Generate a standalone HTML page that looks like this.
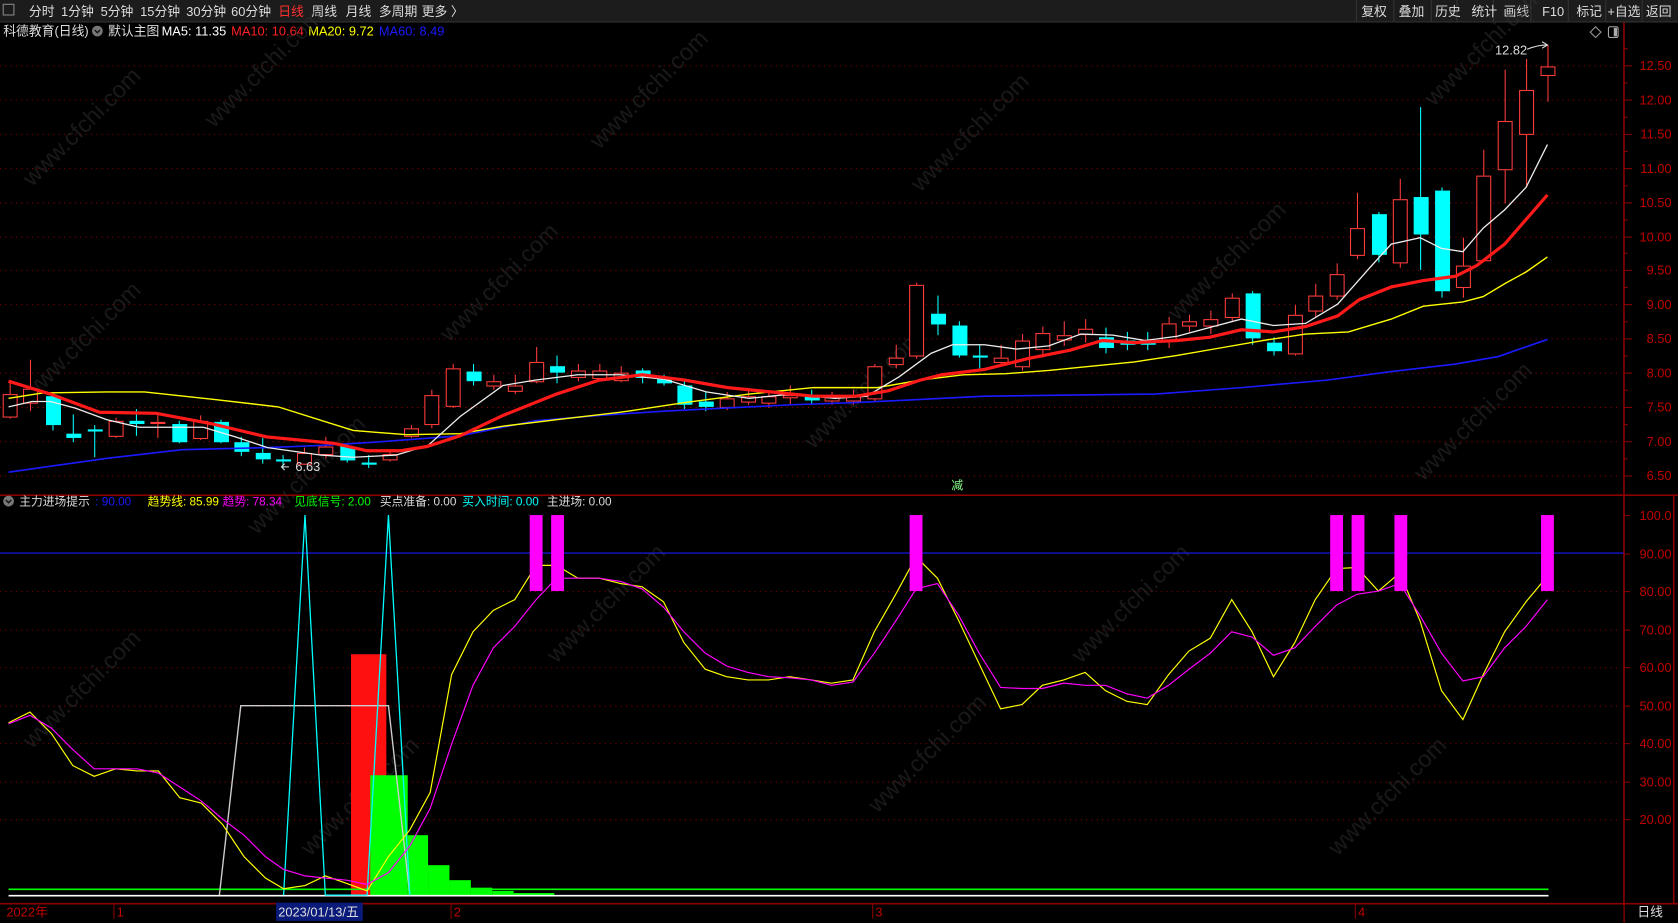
<!DOCTYPE html>
<html><head><meta charset="utf-8">
<style>
html,body{margin:0;padding:0;background:#000;width:1678px;height:923px;overflow:hidden}
svg{display:block}
text{font-family:"Liberation Sans","Noto Sans CJK SC",sans-serif}
</style></head>
<body>
<svg id="s" width="1678" height="923" viewBox="0 0 1568 862" preserveAspectRatio="none" xmlns="http://www.w3.org/2000/svg">
<rect x="0" y="0" width="1568" height="862" fill="#000"/>
<rect x="0" y="0" width="1568" height="20" fill="#1c1c1c"/>
<line x1="0" y1="20.5" x2="1568" y2="20.5" stroke="#333"/>
<g font-size="12" fill="#ddd">
<rect x="3" y="4" width="10" height="10" fill="none" stroke="#888"/>
<text x="27" y="15">分时</text><text x="57" y="15">1分钟</text><text x="94" y="15">5分钟</text><text x="131" y="15">15分钟</text><text x="174" y="15">30分钟</text><text x="216" y="15">60分钟</text>
<text x="260" y="15" fill="#ff3030">日线</text><text x="291" y="15">周线</text><text x="323" y="15">月线</text><text x="354" y="15">多周期</text><text x="394" y="15">更多 〉</text>
</g>
<g font-size="12" fill="#ddd">
<rect x="1361" y="0" width="1" height="20" fill="#333"/>
<rect x="1395" y="0" width="1" height="20" fill="#333"/>
<rect x="1430" y="0" width="1" height="20" fill="#333"/>
<rect x="1465" y="0" width="1" height="20" fill="#333"/>
<rect x="1500" y="0" width="1" height="20" fill="#333"/>
<rect x="1534" y="0" width="1" height="20" fill="#333"/>
<rect x="1267" y="0" width="1" height="20" fill="#333"/>
<rect x="1302" y="0" width="1" height="20" fill="#333"/>
<rect x="1337" y="0" width="1" height="20" fill="#333"/>
<text x="1272" y="15">复权</text><text x="1307" y="15">叠加</text><text x="1341" y="15">历史</text><text x="1375" y="15">统计</text><text x="1405" y="15">画线</text><text x="1441" y="15">F10</text><text x="1473" y="15">标记</text><text x="1502" y="15">+自选</text><text x="1538" y="15">返回</text>
</g>
<g font-size="12">
<text x="3" y="33" fill="#ddd">科德教育(日线)</text>
<circle cx="91" cy="29" r="5" fill="#777"/><path d="M88.5 28l2.5 2.5 2.5-2.5" stroke="#111" fill="none" stroke-width="1.3"/>
<text x="101" y="33" fill="#ddd">默认主图</text>
<text x="151" y="33" fill="#fff">MA5: 11.35</text>
<text x="216" y="33" fill="#ff2020">MA10: 10.64</text>
<text x="288" y="33" fill="#ffff00">MA20: 9.72</text>
<text x="354" y="33" fill="#1a1aff">MA60: 8.49</text>
</g>
<path d="M1491 25l5 5-5 5-5-5z" fill="none" stroke="#999"/>
<rect x="1503" y="25" width="9" height="10" rx="1.5" fill="none" stroke="#aaa"/><rect x="1508" y="26" width="3" height="8" fill="#aaa"/>
<line x1="1517.5" y1="21" x2="1517.5" y2="862" stroke="#8b0000" stroke-width="1.5"/>
<line x1="0" y1="462.5" x2="1568" y2="462.5" stroke="#8b0000" stroke-width="1.5"/>
<line x1="0" y1="844" x2="1568" y2="844" stroke="#8b0000" stroke-width="1.5"/>
<line x1="1564" y1="462" x2="1564" y2="844" stroke="#8b0000" stroke-width="1.5"/>
<g id="grid"></g>
<g id="wm" font-size="22" fill="#333" opacity="0.5"></g>
<g id="plot"></g>
<text x="1397" y="51" font-size="12" fill="#ddd">12.82</text>
<path d="M1427 46 Q1437 42 1446 42 M1441 39l5 3-5 3" stroke="#ddd" fill="none"/>
<path d="M270 436h-6 M266 433l-3 3 3 3" stroke="#ddd" fill="none"/>
<text x="276" y="440" font-size="12" fill="#ddd">6.63</text>
<text x="889" y="457" font-size="11" fill="#8f8">减</text>
<g font-size="11">
<circle cx="8" cy="468" r="5" fill="#777"/><path d="M5.5 467l2.5 2.5 2.5-2.5" stroke="#111" fill="none" stroke-width="1.3"/>
<text x="18" y="472" fill="#ddd">主力进场提示</text><text x="89" y="472" fill="#1a1aff">: 90.00</text>
<text x="138" y="472" fill="#ffff00">趋势线: 85.99</text>
<text x="208" y="472" fill="#ff00ff">趋势: 78.34</text>
<text x="275" y="472" fill="#00ff00">见底信号: 2.00</text>
<text x="355" y="472" fill="#ddd">买点准备: 0.00</text>
<text x="432" y="472" fill="#00ffff">买入时间: 0.00</text>
<text x="511" y="472" fill="#ddd">主进场: 0.00</text>
</g>
<rect x="0" y="845" width="1517" height="17" fill="#000"/>
<g font-size="12" fill="#c00000">
<text x="6" y="856">2022年</text>
<line x1="106.5" y1="844" x2="106.5" y2="858" stroke="#8b0000"/><text x="109" y="856">1</text>
<line x1="421.5" y1="844" x2="421.5" y2="858" stroke="#8b0000"/><text x="424" y="856">2</text>
<line x1="815.5" y1="844" x2="815.5" y2="858" stroke="#8b0000"/><text x="818" y="856">3</text>
<line x1="1266.5" y1="844" x2="1266.5" y2="858" stroke="#8b0000"/><text x="1269" y="856">4</text>
</g>
<rect x="258" y="843" width="81" height="17" fill="#0a1a7a"/>
<text x="260" y="856" font-size="12" fill="#ddd">2023/01/13/五</text>
<text x="1530" y="856" font-size="12" fill="#ddd">日线</text>
</svg>
<script>
var NS="http://www.w3.org/2000/svg",plot=document.getElementById('plot'),grid=document.getElementById('grid');
function el(t,a,p){var e=document.createElementNS(NS,t);for(var k in a)e.setAttribute(k,a[k]);(p||plot).appendChild(e);return e;}
var py=function(p){return 61+(12.5-p)*63.83;};
for(var p=6.5;p<=12.51;p+=0.5){var y=Math.round(py(p))+.5;el('line',{x1:0,y1:y,x2:1515,y2:y,stroke:'#8b0000','stroke-dasharray':'1 4'},grid);
 el('line',{x1:1517,y1:y,x2:1525,y2:y,stroke:'#8b0000'},grid);
 el('line',{x1:1517,y1:y-16,x2:1521,y2:y-16,stroke:'#8b0000'},grid);
 var t=el('text',{x:1562,y:y+4,'font-size':12,fill:'#c00000','text-anchor':'end'},grid);t.textContent=p.toFixed(2);}
var vy=function(v){return 481+(100-v)*3.55;};
for(var v=20;v<=100;v+=10){var y=Math.round(vy(v))+.5;if(v<100&&v!=90)el('line',{x1:0,y1:y,x2:1515,y2:y,stroke:'#8b0000','stroke-dasharray':'1 4'},grid);
 el('line',{x1:1517,y1:y,x2:1523,y2:y,stroke:'#8b0000'},grid);
 var t=el('text',{x:1562,y:y+4,'font-size':12,fill:'#c00000','text-anchor':'end'},grid);t.textContent=v==100?'100.0':v.toFixed(2);}
var wm=document.getElementById('wm');
[[30,175],[30,375],[30,700],[200,120],[240,500],[290,800],[420,320],[520,620],[560,140],[760,420],[820,760],[860,180],[1010,620],[1100,300],[1250,800],[1340,100],[1330,450]].forEach(function(q){var t=el('text',{x:q[0],y:q[1],transform:'rotate(-45 '+q[0]+' '+q[1]+')'},wm);t.textContent='www.cfchi.com';});
var C=[[9,368,389,355,391,'r'],[28,363,376,336,384,'r'],[49,370,397,368,402,'c'],[68,405,409,387,413,'c'],[88,401,403,397,427,'c'],[108,393,407,390,409,'r'],[127,393,396,382,407,'c'],[147,394,395,385,409,'r'],[167,396,413,393,414,'c'],[187,393,409,388,411,'r'],[206,394,413,392,414,'c'],[225,413,422,408,426,'c'],[245,423,429,409,433,'c'],[264,429,431,425,437,'c'],[284,423,433,418,434,'r'],[304,417,424,408,428,'r'],[324,417,430,414,432,'c'],[344,432,434,425,437,'c'],[364,424,429,420,431,'r'],[384,400,407,397,409,'r'],[403,369,396,364,400,'r'],[423,344,379,340,381,'r'],[442,347,356,340,360,'c'],[461,356,360,350,364,'r'],[481,360,365,350,368,'r'],[501,338,356,324,358,'r'],[520,342,348,332,358,'c'],[540,346,352,340,356,'r'],[560,346,353,340,356,'r'],[580,348,355,342,357,'r'],[600,346,353,344,358,'c'],[620,354,358,350,360,'c'],[639,360,378,355,382,'c'],[659,375,380,366,384,'c'],[679,372,380,366,383,'r'],[699,370,375,364,378,'r'],[718,370,376,366,381,'r'],[738,369,371,360,378,'r'],[758,370,374,364,378,'c'],[777,371,374,366,378,'r'],[797,369,374,364,378,'r'],[817,342,372,340,375,'r'],[837,334,340,322,344,'r'],[856,266,332,264,335,'r'],[876,293,303,276,313,'c'],[896,304,332,300,334,'c'],[915,332,334,322,344,'c'],[935,334,338,322,342,'r'],[955,318,342,312,346,'r'],[974,311,326,305,334,'r'],[994,313,317,300,323,'r'],[1014,307,312,298,320,'r'],[1033,315,325,306,330,'c'],[1053,318,322,310,327,'c'],[1072,318,322,310,327,'c'],[1092,302,318,296,325,'r'],[1111,300,304,294,310,'r'],[1131,298,304,290,312,'r'],[1151,278,296,274,300,'r'],[1170,274,316,272,322,'c'],[1190,320,328,315,332,'c'],[1210,294,330,285,332,'r'],[1229,276,290,265,296,'r'],[1249,256,276,246,280,'r'],[1268,213,238,180,242,'r'],[1288,200,238,198,245,'c'],[1308,186,245,167,250,'r'],[1327,184,219,100,252,'c'],[1347,178,272,175,278,'c'],[1367,248,268,222,278,'r'],[1386,164,243,140,245,'r'],[1406,113,158,65,190,'r'],[1426,84,125,55,175,'r'],[1446,62,70,42,95,'r']];
C.forEach(function(c){var x=c[0],col=c[5]=='r'?'#ff3b3b':'#00ffff';
 if(c[5]=='r'){el('line',{x1:x+.5,y1:c[3],x2:x+.5,y2:c[1],stroke:col});el('line',{x1:x+.5,y1:c[2],x2:x+.5,y2:c[4],stroke:col});
  el('rect',{x:x-6,y:c[1]+.5,width:13,height:Math.max(1,c[2]-c[1]),fill:'#000',stroke:col});}
 else{el('line',{x1:x+.5,y1:c[3],x2:x+.5,y2:c[4],stroke:col});el('rect',{x:x-6,y:c[1],width:14,height:Math.max(2,c[2]-c[1]),fill:col});}});
function pl(pts,col,w){el('polyline',{points:pts,fill:'none',stroke:col,'stroke-width':w});}
pl('8,441 50,435 100,428 170,420 250,418 300,416 350,413 430,407 500,393 560,388 620,384 680,381 740,378 800,376 860,373 920,370 1000,369 1080,368 1160,362 1240,355 1300,347 1360,340 1400,333 1446,317','#1a1aff',1.5);
pl('8,372 40,367 100,366 135,366 200,373 260,380 330,402 380,406 430,405 470,398 520,392 580,385 640,376 700,368 760,362 820,362 860,355 900,350 940,349 980,346 1020,342 1060,338 1100,332 1140,325 1180,318 1220,312 1260,310 1300,298 1330,286 1367,282 1386,277 1406,265 1426,254 1446,240','#ffff00',1.3);
pl('8,380 30,375 47,375 70,381 100,392 130,399 190,399 220,408 250,418 300,425 330,427 370,425 400,416 430,389 470,360 500,355 540,350 580,350 620,354 660,366 700,372 740,368 780,372 810,370 840,352 870,330 890,322 920,322 950,326 980,323 1010,312 1040,313 1070,318 1100,314 1130,306 1160,298 1190,304 1220,302 1250,284 1280,250 1300,228 1327,222 1347,232 1367,235 1386,213 1406,196 1426,175 1446,135','#eeeeee',1.2);
pl('8,356 47,368 93,385 146,386 199,396 249,408 312,414 343,421 374,421 399,417 430,407 470,388 520,368 560,355 600,350 640,355 680,362 720,366 760,370 800,370 830,365 860,355 880,350 920,345 960,335 1000,327 1030,318 1060,320 1100,318 1130,315 1160,308 1190,310 1220,305 1250,295 1270,280 1300,268 1330,262 1360,258 1380,248 1406,228 1426,205 1446,182','#ff1a1a',3);
el('line',{x1:0,y1:516.5,x2:1517,y2:516.5,stroke:'#1a1aff'});
el('rect',{x:328,y:611,width:33,height:225,fill:'#ff1010'});
[[346,381,724],[381,400,780],[400,420,808],[420,440,822],[440,460,829],[460,480,832],[480,518,834]].forEach(function(g){el('rect',{x:g[0],y:g[2],width:g[1]-g[0],height:836-g[2],fill:'#00ff00'});});
el('line',{x1:8,y1:830.5,x2:1447,y2:830.5,stroke:'#00ff00','stroke-width':1.5});
el('line',{x1:8,y1:836.5,x2:1447,y2:836.5,stroke:'#fff','stroke-width':1.5});
pl('205,836 225,659 363,659 383,836','#cccccc',1.3);
pl('265,836 285,481 304,836 343,836 363,481 383,836','#00ffff',1.2);
pl('8,675 28,665 48,685 68,715 88,725 108,718 128,720 148,720 168,745 188,750 208,770 228,800 248,820 265,830 285,827 304,818 324,825 343,832 363,800 383,775 402,740 422,630 442,590 461,570 481,560 501,528 520,528 540,540 560,540 580,545 600,548 620,562 639,600 659,625 679,632 699,635 718,635 738,632 758,635 777,638 797,635 817,590 837,555 856,520 876,540 896,580 915,620 935,662 955,658 974,640 994,635 1014,628 1033,645 1053,655 1072,658 1092,630 1111,608 1131,596 1151,560 1170,590 1190,632 1210,600 1229,560 1249,531 1268,530 1288,552 1308,535 1327,580 1347,645 1367,672 1386,630 1406,590 1426,562 1446,538','#ffff00',1.1);
pl('8,676 28,668 48,680 68,700 88,718 108,718 128,718 148,722 168,735 188,748 208,765 228,780 248,800 265,812 285,818 304,820 324,822 343,826 363,815 383,790 402,755 422,695 442,640 461,605 481,585 501,560 520,540 540,540 560,540 580,543 600,550 620,567 639,590 659,610 679,622 699,628 718,632 738,633 758,635 777,640 797,637 817,610 837,580 856,550 876,545 896,575 915,610 935,642 955,643 974,643 994,638 1014,640 1033,640 1053,648 1072,652 1092,640 1111,625 1131,610 1151,590 1170,595 1190,612 1210,605 1229,585 1249,565 1268,555 1288,552 1308,545 1327,575 1347,610 1367,636 1386,632 1406,605 1426,585 1446,560','#ff00ff',1.1);
[495,515,850,1243,1263,1303,1440].forEach(function(x){el('rect',{x:x,y:481,width:12,height:71,fill:'#ff00ff'});});
</script>
</body></html>
